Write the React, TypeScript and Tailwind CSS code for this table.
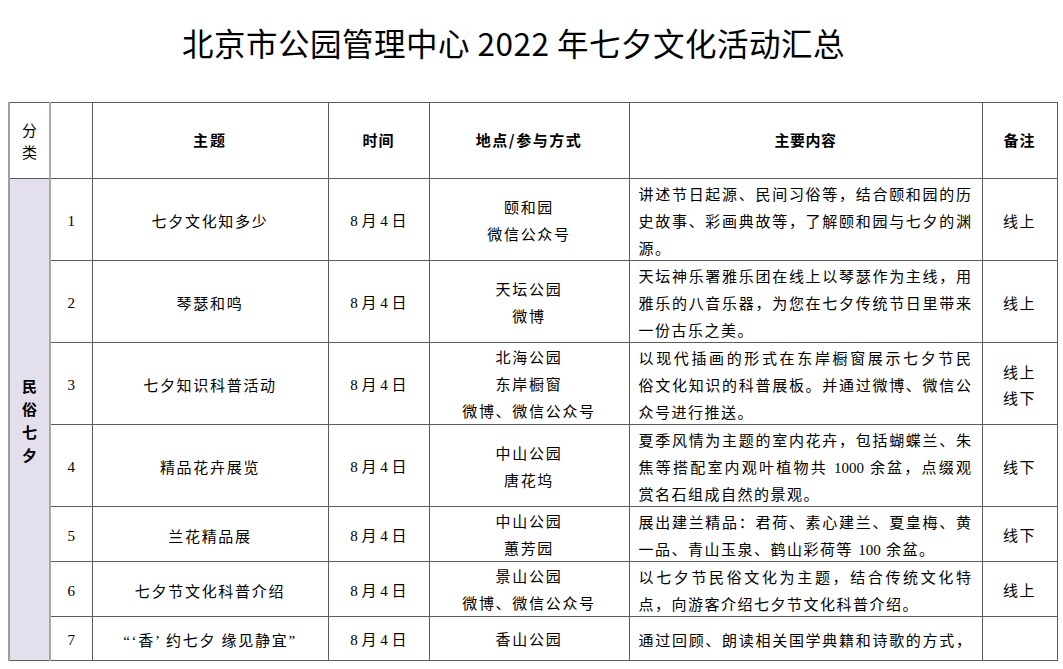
import React from 'react';

interface Activity {
  no: number;
  topic: string;
  date: string;
  place: string[];
  content: React.ReactNode[];
  note: string[];
  height: string;
}

const Num = ({ children }: { children: React.ReactNode }) => (
  <span className="tracking-normal">{children}</span>
);

const activities: Activity[] = [
  {
    no: 1,
    topic: '七夕文化知多少',
    date: '8 月 4 日',
    place: ['颐和园', '微信公众号'],
    content: ['讲述节日起源、民间习俗等，结合颐和园的历', '史故事、彩画典故等，了解颐和园与七夕的渊', '源。'],
    note: ['线上'],
    height: 'h-[82px]',
  },
  {
    no: 2,
    topic: '琴瑟和鸣',
    date: '8 月 4 日',
    place: ['天坛公园', '微博'],
    content: ['天坛神乐署雅乐团在线上以琴瑟作为主线，用', '雅乐的八音乐器，为您在七夕传统节日里带来', '一份古乐之美。'],
    note: ['线上'],
    height: 'h-[82px]',
  },
  {
    no: 3,
    topic: '七夕知识科普活动',
    date: '8 月 4 日',
    place: ['北海公园', '东岸橱窗', '微博、微信公众号'],
    content: ['以现代插画的形式在东岸橱窗展示七夕节民', '俗文化知识的科普展板。并通过微博、微信公', '众号进行推送。'],
    note: ['线上', '线下'],
    height: 'h-[82px]',
  },
  {
    no: 4,
    topic: '精品花卉展览',
    date: '8 月 4 日',
    place: ['中山公园', '唐花坞'],
    content: [
      '夏季风情为主题的室内花卉，包括蝴蝶兰、朱',
      <>
        焦等搭配室内观叶植物共 <Num>1000</Num> 余盆，点缀观
      </>,
      '赏名石组成自然的景观。',
    ],
    note: ['线下'],
    height: 'h-[82px]',
  },
  {
    no: 5,
    topic: '兰花精品展',
    date: '8 月 4 日',
    place: ['中山公园', '蕙芳园'],
    content: [
      '展出建兰精品：君荷、素心建兰、夏皇梅、黄',
      <>
        一品、青山玉泉、鹤山彩荷等 <Num>100</Num> 余盆。
      </>,
    ],
    note: ['线下'],
    height: 'h-[55px]',
  },
  {
    no: 6,
    topic: '七夕节文化科普介绍',
    date: '8 月 4 日',
    place: ['景山公园', '微博、微信公众号'],
    content: ['以七夕节民俗文化为主题，结合传统文化特', '点，向游客介绍七夕节文化科普介绍。'],
    note: ['线上'],
    height: 'h-[55px]',
  },
  {
    no: 7,
    topic: '“‘香’ 约七夕 缘见静宜”',
    date: '8 月 4 日',
    place: ['香山公园'],
    content: ['通过回顾、朗读相关国学典籍和诗歌的方式，'],
    note: [],
    height: 'h-[44px]',
  },
];

const cell = 'border border-[#5c5c5c] p-0 align-middle';

export default function App() {
  return (
    <div className="w-[1063px] bg-white text-black font-['Liberation_Serif','Noto_Sans_CJK_SC',serif]">
      {/* Title */}
      <div className="h-[102px] pt-[22px] pr-[36px] text-center">
        <span className="font-['Noto_Sans_CJK_SC',sans-serif] text-[31.5px] leading-[40px] tracking-[0.5px]">
          北京市公园管理中心 2022 年七夕文化活动汇总
        </span>
      </div>

      <div className="pl-[8px]">
        <table className="table-fixed border-collapse w-[1048px] text-[15px]">
          <colgroup>
            <col className="w-[41px]" />
            <col className="w-[42px]" />
            <col className="w-[236px]" />
            <col className="w-[101px]" />
            <col className="w-[200px]" />
            <col className="w-[353px]" />
            <col className="w-[75px]" />
          </colgroup>
          <thead>
            <tr className="h-[76px] font-['Noto_Sans_CJK_SC',sans-serif] font-bold">
              <th className={`${cell} border-l-2 border-l-[#9e9e9e] border-r-2 border-r-[#a8a8a8] font-normal leading-[22px]`}>
                分<br />类
              </th>
              <th className={cell}></th>
              <th className={`${cell} tracking-[2px]`}>主题</th>
              <th className={`${cell} tracking-[1px]`}>时间</th>
              <th className={`${cell} tracking-[1.5px]`}>地点/参与方式</th>
              <th className={`${cell} tracking-[0.5px]`}>主要内容</th>
              <th className={`${cell} tracking-[1px]`}>备注</th>
            </tr>
          </thead>
          <tbody>
            {activities.map((a, i) => (
              <tr key={a.no} className={a.height}>
                {i === 0 && (
                  <td
                    rowSpan={activities.length}
                    className={`${cell} border-l-2 border-l-[#9e9e9e] border-r-2 border-r-[#a8a8a8] bg-[#e4dfec] text-center font-['Noto_Sans_CJK_SC',sans-serif] font-bold leading-[23px]`}
                  >
                    民<br />俗<br />七<br />夕
                  </td>
                )}
                <td className={`${cell} text-center`}>
                  <span className="relative top-[2px]">{a.no}</span>
                </td>
                <td className={`${cell} text-center tracking-[1.7px]`}>
                  <div className="relative top-[3px]">{a.topic}</div>
                </td>
                <td className={`${cell} text-center`}>
                  <div className="relative top-[2px]">{a.date}</div>
                </td>
                <td className={`${cell} text-center tracking-[1.7px] leading-[27px]`}>
                  <div className="relative top-[2px]">
                    {a.place.map((p) => (
                      <div key={p}>{p}</div>
                    ))}
                  </div>
                </td>
                <td className={`${cell} px-[9px] tracking-[1.5px] leading-[27px]`}>
                  <div className="relative top-[3px]">
                    {a.content.map((line, j) => (
                      <div
                        key={j}
                        className={
                          j < a.content.length - 1 || a.no === 7
                            ? 'text-justify [text-align-last:justify] whitespace-nowrap'
                            : 'text-left whitespace-nowrap'
                        }
                      >
                        {line}
                      </div>
                    ))}
                  </div>
                </td>
                <td className={`${cell} text-center tracking-[1.5px] leading-[26px]`}>
                  <div className="relative top-[2px]">
                    {a.note.map((n) => (
                      <div key={n}>{n}</div>
                    ))}
                  </div>
                </td>
              </tr>
            ))}
          </tbody>
        </table>
      </div>
    </div>
  );
}
